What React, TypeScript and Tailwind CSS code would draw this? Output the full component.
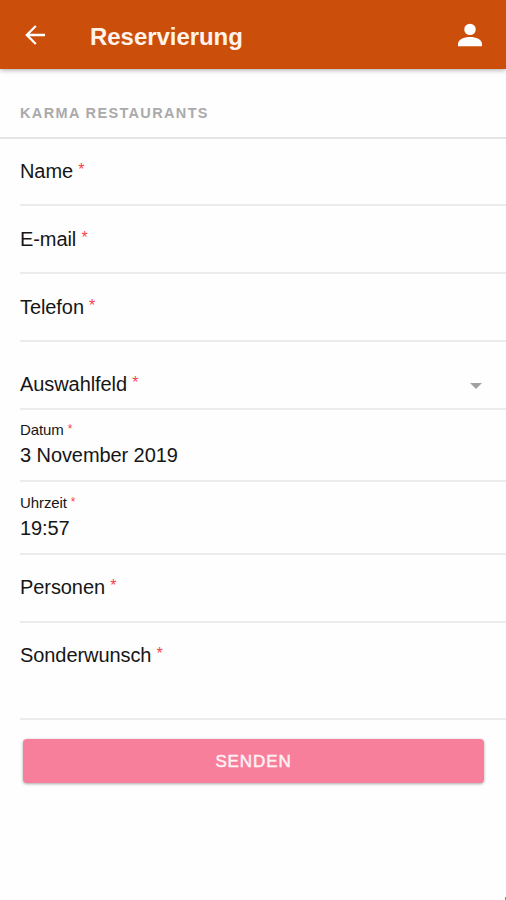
import React from "react";

function Required() {
  return <span className="relative -top-[0.2em] -ml-[0.02em] text-[0.8em] leading-none text-[#f8414c]">*</span>;
}

function Row({ className, children }: { className: string; children: React.ReactNode }) {
  return (
    <div className={`ml-5 border-b-2 border-[#ececec] text-xl leading-6 tracking-[-0.08px] ${className}`}>
      {children}
    </div>
  );
}

function Label({ children }: { children: React.ReactNode }) {
  return (
    <label className="block whitespace-pre">
      {children}{" "}
      <Required />
    </label>
  );
}

export default function App() {
  return (
    <div className="relative h-[900px] w-[506px] overflow-hidden bg-[#fefefe] font-['Liberation_Sans',Arial,sans-serif] text-[#161616]">
      <header className="flex h-[69px] items-center bg-[#cb4e0b] pt-0.5 text-white shadow-[0_1px_5px_rgba(0,0,0,0.35)]">
        <svg viewBox="0 0 20 20" className="-mt-0.5 ml-[25px] h-5 w-5" fill="none" stroke="currentColor" strokeWidth="2.3">
          <path d="M20 10H2M10.8 1L1.8 10l9 9" />
        </svg>
        <h1 className="mt-0.5 ml-[45px] text-2xl leading-7 font-bold tracking-[-0.05px] text-[#fff3ea]">Reservierung</h1>
        <svg viewBox="0 0 24 24" className="-mt-0.5 mr-6 ml-auto h-6 w-6" fill="currentColor">
          <circle cx="12" cy="6.4" r="5.7" />
          <path d="M0 23.3v-2.4c0-4.2 6-6.9 12-6.9s12 2.7 12 6.9v2.4z" />
        </svg>
      </header>

      <h2 className="h-[70px] border-b-2 border-[#e5e5e5] pt-[34px] pl-5 text-[14.5px] leading-5 font-bold tracking-[1.35px] text-[#aaa]">
        KARMA RESTAURANTS
      </h2>

      <form>
        <Row className="h-[67px] pt-5"><Label>Name</Label></Row>
        <Row className="h-[68px] pt-[21px]"><Label>E-mail</Label></Row>
        <Row className="h-[68px] pt-[21px]"><Label>Telefon</Label></Row>
        <Row className="flex h-[68px] justify-between pt-[30px]">
          <Label>Auswahlfeld</Label>
          <svg viewBox="0 0 12 6" className="mt-[11px] mr-6 h-1.5 w-3" fill="#a0a0a0">
            <path d="M0 0h12L6 6z" />
          </svg>
        </Row>
        <Row className="h-[72px] pt-[11px]">
          <div className="text-[15px] leading-[18px]"><Label>Datum</Label></div>
          <div className="mt-1">3 November 2019</div>
        </Row>
        <Row className="h-[73px] pt-3">
          <div className="text-[15px] leading-[18px]"><Label>Uhrzeit</Label></div>
          <div className="mt-1">19:57</div>
        </Row>
        <Row className="h-[68px] pt-5"><Label>Personen</Label></Row>
        <Row className="h-[97px] pt-5"><Label>Sonderwunsch</Label></Row>
        <button
          type="button"
          className="mt-[19px] ml-[23px] block h-11 w-[461px] rounded bg-[#f87f9b] pt-0.5 text-[17px] tracking-[0.9px] text-[#fff0f3] shadow-[0_1px_3px_rgba(0,0,0,0.35)] [-webkit-text-stroke:0.5px_#fff0f3]"
        >
          SENDEN
        </button>
      </form>
      <span className="absolute right-0 bottom-0 h-[3px] w-px bg-[#8a8490]" />
    </div>
  );
}
